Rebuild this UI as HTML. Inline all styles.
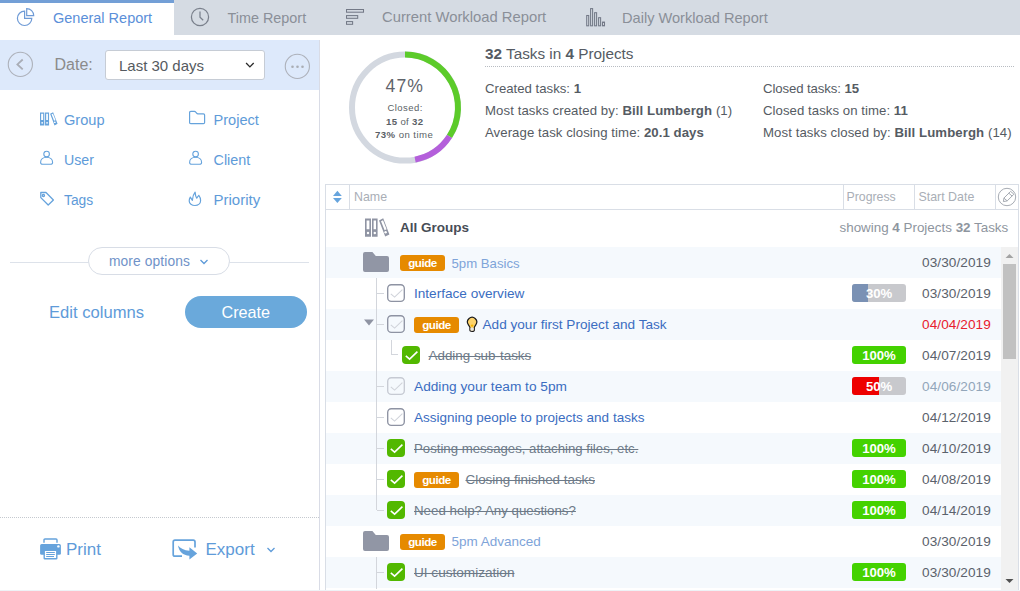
<!DOCTYPE html><html><head><meta charset="utf-8"><style>
html,body{margin:0;padding:0;width:1020px;height:591px;overflow:hidden;background:#fff;font-family:"Liberation Sans",sans-serif}
.t{position:absolute;white-space:nowrap}
b{font-weight:700}
</style></head><body>
<div style="position:absolute;left:0;top:0;width:1020px;height:35px;background:#d5dbe3"></div>
<div style="position:absolute;left:0;top:0;width:174px;height:35px;background:#fff"></div>
<div style="position:absolute;left:0;top:0;width:174px;height:3px;background:#739fd6"></div>
<svg style="position:absolute;left:16px;top:7px" width="20" height="20" viewBox="0 0 20 20" fill="none" stroke="#6f9bd6" stroke-width="1.2">
<path d="M8.6 4.1 A7.2 7.2 0 1 0 15.8 11.3 L8.6 11.3 Z"/><path d="M10.7 1.6 A7 7 0 0 1 17.7 8.6 L10.7 8.6 Z"/></svg>
<svg style="position:absolute;left:190px;top:7px" width="20" height="20" viewBox="0 0 20 20" fill="none" stroke="#7a808c" stroke-width="1.25">
<circle cx="10" cy="10" r="8.6"/><path d="M10 4.5 V10.2 L13.2 13.2"/></svg>
<svg style="position:absolute;left:346px;top:9px" width="20" height="18" viewBox="0 0 20 18" fill="none" stroke="#737987" stroke-width="1.05">
<rect x="0.5" y="0.5" width="17" height="2.7"/><rect x="0.5" y="6.6" width="11.2" height="2.7"/><rect x="0.5" y="12.6" width="6.1" height="2.7"/></svg>
<svg style="position:absolute;left:586px;top:8px" width="20" height="19" viewBox="0 0 20 19" fill="none" stroke="#737987" stroke-width="1.05">
<rect x="0.7" y="7.5" width="2" height="10.3"/><rect x="4.6" y="0.6" width="2" height="17.2"/><rect x="8.6" y="4.7" width="2" height="13.1"/><rect x="12.6" y="9.7" width="2" height="8.1"/><rect x="16.5" y="14.1" width="2" height="3.7"/></svg>
<div style="position:absolute;left:0;top:40px;width:319px;height:50px;background:#dde9fb"></div>
<div style="position:absolute;left:319px;top:40px;width:1px;height:550px;background:#d9dce6"></div>
<svg style="position:absolute;left:7px;top:51px" width="27" height="27" viewBox="0 0 27 27" fill="none" stroke="#adb1ba" stroke-width="1.1">
<circle cx="13.35" cy="13.35" r="12.1"/><path d="M15.7 8.5 L10.4 13.4 L15.7 18.3" stroke="#a9adb6" stroke-width="1.8"/></svg>
<div style="position:absolute;left:105px;top:50px;width:158px;height:28px;background:#fff;border:1px solid #c6ccd5;border-radius:3px"></div>
<svg style="position:absolute;left:244px;top:60px" width="12" height="10" viewBox="0 0 12 10" fill="none" stroke="#2a2a2a" stroke-width="1.35">
<path d="M2.1 3.1 L5.9 6.9 L9.7 3.1"/></svg>
<svg style="position:absolute;left:284px;top:53px" width="27" height="27" viewBox="0 0 27 27" fill="none" stroke="#adb1ba" stroke-width="1.1">
<circle cx="13.35" cy="13.35" r="12.1"/><g fill="#a9adb4" stroke="none"><circle cx="8.5" cy="13.8" r="1.3"/><circle cx="13.5" cy="13.8" r="1.3"/><circle cx="18.5" cy="13.8" r="1.3"/></g></svg>
<svg style="position:absolute;left:40px;top:112px" width="18" height="14" viewBox="0 0 25 19.4"><g fill="#66a3dc">
<path fill-rule="evenodd" d="M0 0.6 H6 V18.8 H0 Z M1.6 2.4 V11.2 H4.4 V2.4 Z"/>
<path fill-rule="evenodd" d="M7 0.6 H12.6 V18.8 H7 Z M8.6 2.4 V11.2 H11 V2.4 Z"/>
<path fill-rule="evenodd" d="M14 2.4 L18.2 0.2 L24.4 16.4 L20.2 18.6 Z M16 3.2 L19.6 12.2 L21.6 11.3 L18 2.3 Z"/>
</g>
<circle cx="3" cy="15" r="1.2" fill="#fff"/><circle cx="9.8" cy="15" r="1.2" fill="#fff"/><circle cx="20.6" cy="14.2" r="1.2" fill="#fff"/></svg>
<svg style="position:absolute;left:188px;top:110px" width="18" height="15" viewBox="0 0 18 15" fill="none" stroke="#66a3dc" stroke-width="1.2">
<path d="M1.6 2.6 Q1.6 1.4 2.8 1.4 H6.4 Q7.2 1.4 7.8 2.2 L8.6 3.2 Q9.1 3.9 10 3.9 H15.4 Q16.6 3.9 16.6 5.1 V12.4 Q16.6 13.6 15.4 13.6 H2.8 Q1.6 13.6 1.6 12.4 Z"/></svg>
<svg style="position:absolute;left:39px;top:150px" width="16" height="16" viewBox="0 0 16 16" fill="none" stroke="#66a3dc" stroke-width="1.1"><circle cx="7.6" cy="4.1" r="2.8"/><path d="M1.6 12.4 C1.6 9.4 4.1 7.3 7.6 7.3 C11.1 7.3 13.6 9.4 13.6 12.4 C13.6 13.8 12.6 14.3 11.4 14.3 H3.8 C2.6 14.3 1.6 13.8 1.6 12.4 Z"/></svg>
<svg style="position:absolute;left:188px;top:150px" width="16" height="16" viewBox="0 0 16 16" fill="none" stroke="#66a3dc" stroke-width="1.1"><circle cx="7.6" cy="4.1" r="2.8"/><path d="M1.6 12.4 C1.6 9.4 4.1 7.3 7.6 7.3 C11.1 7.3 13.6 9.4 13.6 12.4 C13.6 13.8 12.6 14.3 11.4 14.3 H3.8 C2.6 14.3 1.6 13.8 1.6 12.4 Z"/></svg>
<svg style="position:absolute;left:38px;top:190px" width="18" height="17" viewBox="0 0 18 17" fill="none" stroke="#66a3dc" stroke-width="1.3" stroke-linejoin="round">
<path d="M2.8 2.5 H8 L15.4 10 L10.2 15 L2.8 7.6 Z"/><circle cx="5.4" cy="5.4" r="1.1"/></svg>
<svg style="position:absolute;left:188px;top:190px" width="14" height="17" viewBox="0 0 14 17" fill="none" stroke="#66a3dc" stroke-width="1.2" stroke-linejoin="round">
<path d="M2.3 7.1 L4.4 10.3 C4.6 6.5 5.5 4 7.1 2.1 C7.3 4.5 7.6 6.8 8.7 8.2 C9.4 7.2 10 6.2 10.8 5.3 C12 6.8 12.6 8.5 12.6 10.5 C12.6 13.5 10.2 15.5 7 15.5 C3.8 15.5 1.2 13.5 1.2 11 C1.2 9.5 1.6 8.2 2.3 7.1 Z"/></svg>
<div style="position:absolute;left:10px;top:262px;width:299px;height:1px;background:#dde2ea"></div>
<div style="position:absolute;left:88px;top:247px;width:140px;height:26px;background:#fff;border:1px solid #d8dde6;border-radius:14px"></div>
<svg style="position:absolute;left:199px;top:258px" width="10" height="8" viewBox="0 0 10 8" fill="none" stroke="#5d9ad8" stroke-width="1.3"><path d="M1.5 2 L5 5.5 L8.5 2"/></svg>
<div style="position:absolute;left:185px;top:296px;width:122px;height:32px;background:#6aa9db;border-radius:16px"></div>
<div style="position:absolute;left:0;top:517px;width:319px;height:0;border-top:1px dotted #c5c9cf"></div>
<svg style="position:absolute;left:38px;top:537px" width="24" height="24" viewBox="0 0 24 24">
<path d="M6 5.8 V3 Q6 2 7 2 H18 Q19 2 19 3 V5.8" fill="none" stroke="#66a3dc" stroke-width="1.4"/>
<rect x="2.1" y="7" width="20.8" height="10.7" rx="1.5" fill="#66a3dc"/>
<rect x="6.2" y="13.4" width="12.6" height="8.4" rx="0.6" fill="#fff" stroke="#66a3dc" stroke-width="1.4"/>
<path d="M8.2 15.5 H16.8 M8.2 17.5 H16.8 M8.2 19.5 H16" stroke="#66a3dc" stroke-width="1"/><circle cx="20.4" cy="9.4" r="1.2" fill="#fff"/></svg>
<svg style="position:absolute;left:172px;top:539px" width="27" height="22" viewBox="0 0 27 22" fill="none">
<path d="M10 17.2 H3 Q1.2 17.2 1.2 15.4 V3 Q1.2 1.2 3 1.2 H21.2 Q23 1.2 23 3 V8.5" stroke="#66a3dc" stroke-width="1.7"/>
<path d="M6 6.6 C8.5 9.5 12 11.5 17.4 11.8 V8.3 L25.2 14.5 L17.4 20.4 V16.8 C11 16.5 6.8 12.5 6 6.6 Z" fill="#66a3dc"/></svg>
<svg style="position:absolute;left:266px;top:546px" width="10" height="8" viewBox="0 0 10 8" fill="none" stroke="#5e9bd9" stroke-width="1.3"><path d="M1.5 2 L5 5.5 L8.5 2"/></svg>
<svg style="position:absolute;left:0;top:0" width="1020" height="200"><circle cx="405" cy="107.6" r="53" stroke="#d3d8e0" stroke-width="6" fill="none"/><path d="M405.00 54.60 A53 53 0 0 1 449.45 136.47" stroke="#5ccb2a" stroke-width="6" fill="none"/><path d="M449.45 136.47 A53 53 0 0 1 415.11 159.63" stroke="#b45fdb" stroke-width="6" fill="none"/></svg>
<div style="position:absolute;left:485px;top:66px;width:529px;height:0;border-top:1px dotted #b8bcc2"></div>
<div style="position:absolute;left:325px;top:184px;width:694px;height:406px;border-left:1px solid #d9dee6;border-top:1px solid #d9dee6;border-right:1px solid #d9dee6;box-sizing:border-box"></div>
<div style="position:absolute;left:325px;top:209px;width:694px;height:1px;background:#d9dee6"></div>
<div style="position:absolute;left:349px;top:185px;width:1px;height:24px;background:#d9dee6"></div>
<div style="position:absolute;left:843px;top:185px;width:1px;height:24px;background:#d9dee6"></div>
<div style="position:absolute;left:914px;top:185px;width:1px;height:24px;background:#d9dee6"></div>
<div style="position:absolute;left:995px;top:185px;width:1px;height:24px;background:#d9dee6"></div>
<svg style="position:absolute;left:332px;top:190px" width="11" height="14" viewBox="0 0 11 14" fill="#66a4dd">
<path d="M1 6 L5.4 0.8 L9.8 6 Z"/><path d="M1 8 L5.4 13 L9.8 8 Z"/></svg>
<svg style="position:absolute;left:997px;top:187px" width="20" height="20" viewBox="0 0 20 20" fill="none" stroke="#a6abb3" stroke-width="1">
<circle cx="10" cy="10" r="8.7"/><path d="M13.6 4.4 L16.9 7.2 L10.2 13.9 L6.4 14.6 L6.9 11.1 Z M11.8 6.2 L15.1 9.0 M6.9 11.1 L10.2 13.9"/></svg>
<svg style="position:absolute;left:365px;top:218px" width="25" height="20" viewBox="0 0 25 20">
<g fill="#8f94a3">
<path fill-rule="evenodd" d="M0 0.6 H6 V18.8 H0 Z M1.6 2.4 V11.2 H4.4 V2.4 Z"/>
<path fill-rule="evenodd" d="M7 0.6 H12.6 V18.8 H7 Z M8.6 2.4 V11.2 H11 V2.4 Z"/>
<path fill-rule="evenodd" d="M14 2.4 L18.2 0.2 L24.4 16.4 L20.2 18.6 Z M16 3.2 L19.6 12.2 L21.6 11.3 L18 2.3 Z"/>
</g>
<circle cx="3" cy="15" r="1.2" fill="#fff"/><circle cx="9.8" cy="15" r="1.2" fill="#fff"/><circle cx="20.6" cy="14.2" r="1.2" fill="#fff"/></svg>
<div style="position:absolute;left:326px;top:247px;width:675px;height:31px;background:#f5f9fd"></div>
<div style="position:absolute;left:326px;top:278px;width:675px;height:31px;background:#ffffff"></div>
<div style="position:absolute;left:326px;top:309px;width:675px;height:31px;background:#f5f9fd"></div>
<div style="position:absolute;left:326px;top:340px;width:675px;height:31px;background:#ffffff"></div>
<div style="position:absolute;left:326px;top:371px;width:675px;height:31px;background:#f5f9fd"></div>
<div style="position:absolute;left:326px;top:402px;width:675px;height:31px;background:#ffffff"></div>
<div style="position:absolute;left:326px;top:433px;width:675px;height:31px;background:#f5f9fd"></div>
<div style="position:absolute;left:326px;top:464px;width:675px;height:31px;background:#ffffff"></div>
<div style="position:absolute;left:326px;top:495px;width:675px;height:31px;background:#f5f9fd"></div>
<div style="position:absolute;left:326px;top:526px;width:675px;height:31px;background:#ffffff"></div>
<div style="position:absolute;left:326px;top:557px;width:675px;height:31px;background:#f5f9fd"></div>
<svg style="position:absolute;left:363px;top:252px" width="26" height="20" viewBox="0 0 26 20"><path d="M0 2 Q0 0 2 0 H9.4 L12.8 4 H24 Q26 4 26 6 V18 Q26 20 24 20 H2 Q0 20 0 18 Z" fill="#9196a5"/></svg>
<div style="position:absolute;left:400px;top:255px;width:45px;height:16px;background:#e68a00;border-radius:3px"></div>
<div style="position:absolute;left:376px;top:278px;width:1px;height:232px;background:#d3d6dc"></div>
<div style="position:absolute;left:377px;top:293px;width:7px;height:1px;background:#d3d6dc"></div>
<div style="position:absolute;left:377px;top:324px;width:7px;height:1px;background:#d3d6dc"></div>
<div style="position:absolute;left:377px;top:386px;width:7px;height:1px;background:#d3d6dc"></div>
<div style="position:absolute;left:377px;top:417px;width:7px;height:1px;background:#d3d6dc"></div>
<div style="position:absolute;left:377px;top:448px;width:7px;height:1px;background:#d3d6dc"></div>
<div style="position:absolute;left:377px;top:479px;width:7px;height:1px;background:#d3d6dc"></div>
<div style="position:absolute;left:377px;top:510px;width:7px;height:1px;background:#d3d6dc"></div>
<svg style="position:absolute;left:387px;top:284px" width="18" height="18" viewBox="0 0 18 18"><rect x="0.7" y="0.7" width="16.6" height="16.6" rx="3.6" fill="none" stroke="#8e93a3" stroke-width="1.35"/><path d="M3.8 9.9 L7.6 13.1 L15.4 5.6" stroke="#d0d3da" stroke-width="1.1" fill="none"/></svg>
<div style="position:absolute;left:852px;top:284px;width:54px;height:18px;background:#c8c9cd;border-radius:3px;overflow:hidden"><div style="width:16px;height:18px;background:#7a91b4"></div></div>
<svg style="position:absolute;left:364px;top:319px" width="11" height="7" viewBox="0 0 11 7"><path d="M0 0.5 H10 L5 6.5 Z" fill="#8f94a3"/></svg>
<svg style="position:absolute;left:387px;top:315px" width="18" height="18" viewBox="0 0 18 18"><rect x="0.7" y="0.7" width="16.6" height="16.6" rx="3.6" fill="none" stroke="#8e93a3" stroke-width="1.35"/><path d="M3.8 9.9 L7.6 13.1 L15.4 5.6" stroke="#d0d3da" stroke-width="1.1" fill="none"/></svg>
<div style="position:absolute;left:414px;top:317px;width:45px;height:16px;background:#e68a00;border-radius:3px"></div>
<svg style="position:absolute;left:466px;top:316px" width="12" height="17" viewBox="0 0 12 17"><path d="M2.3 8.6 A4.6 4.6 0 1 1 9.9 8.6 L8.3 11.2 V14 Q8.3 15.4 6.1 15.4 Q3.9 15.4 3.9 14 V11.2 Z" fill="#fdd36b" stroke="#1a1a1a" stroke-width="1.2" stroke-linejoin="round"/><path d="M4.5 11.8 H7.7 V13.9 Q7.7 14.8 6.1 14.8 Q4.5 14.8 4.5 13.9 Z" fill="#e6e6e6"/><circle cx="6.1" cy="9.6" r="1.2" fill="#f5b400"/></svg>
<div style="position:absolute;left:391px;top:340px;width:1px;height:15px;background:#d3d6dc"></div>
<div style="position:absolute;left:392px;top:354px;width:6px;height:1px;background:#d3d6dc"></div>
<svg style="position:absolute;left:402px;top:346px" width="18" height="18" viewBox="0 0 18 18"><rect x="0" y="0" width="18" height="18" rx="4" fill="#52b800"/><path d="M3.8 9.9 L7.6 13.1 L15.4 5.7" stroke="#fff" stroke-width="1.6" fill="none"/></svg>
<div style="position:absolute;left:852px;top:346px;width:54px;height:18px;background:#c8c9cd;border-radius:3px;overflow:hidden"><div style="width:54px;height:18px;background:#44d200"></div></div>
<svg style="position:absolute;left:387px;top:377px" width="18" height="18" viewBox="0 0 18 18"><rect x="0.7" y="0.7" width="16.6" height="16.6" rx="3.6" fill="none" stroke="#c6cad3" stroke-width="1.35"/><path d="M3.8 9.9 L7.6 13.1 L15.4 5.6" stroke="#d0d3da" stroke-width="1.1" fill="none"/></svg>
<div style="position:absolute;left:852px;top:377px;width:54px;height:18px;background:#c8c9cd;border-radius:3px;overflow:hidden"><div style="width:27px;height:18px;background:#ee0000"></div></div>
<svg style="position:absolute;left:387px;top:408px" width="18" height="18" viewBox="0 0 18 18"><rect x="0.7" y="0.7" width="16.6" height="16.6" rx="3.6" fill="none" stroke="#8e93a3" stroke-width="1.35"/><path d="M3.8 9.9 L7.6 13.1 L15.4 5.6" stroke="#d0d3da" stroke-width="1.1" fill="none"/></svg>
<svg style="position:absolute;left:387px;top:439px" width="18" height="18" viewBox="0 0 18 18"><rect x="0" y="0" width="18" height="18" rx="4" fill="#52b800"/><path d="M3.8 9.9 L7.6 13.1 L15.4 5.7" stroke="#fff" stroke-width="1.6" fill="none"/></svg>
<div style="position:absolute;left:852px;top:439px;width:54px;height:18px;background:#c8c9cd;border-radius:3px;overflow:hidden"><div style="width:54px;height:18px;background:#44d200"></div></div>
<svg style="position:absolute;left:387px;top:470px" width="18" height="18" viewBox="0 0 18 18"><rect x="0" y="0" width="18" height="18" rx="4" fill="#52b800"/><path d="M3.8 9.9 L7.6 13.1 L15.4 5.7" stroke="#fff" stroke-width="1.6" fill="none"/></svg>
<div style="position:absolute;left:414px;top:472px;width:45px;height:16px;background:#e68a00;border-radius:3px"></div>
<div style="position:absolute;left:852px;top:470px;width:54px;height:18px;background:#c8c9cd;border-radius:3px;overflow:hidden"><div style="width:54px;height:18px;background:#44d200"></div></div>
<svg style="position:absolute;left:387px;top:501px" width="18" height="18" viewBox="0 0 18 18"><rect x="0" y="0" width="18" height="18" rx="4" fill="#52b800"/><path d="M3.8 9.9 L7.6 13.1 L15.4 5.7" stroke="#fff" stroke-width="1.6" fill="none"/></svg>
<div style="position:absolute;left:852px;top:501px;width:54px;height:18px;background:#c8c9cd;border-radius:3px;overflow:hidden"><div style="width:54px;height:18px;background:#44d200"></div></div>
<svg style="position:absolute;left:363px;top:531px" width="26" height="20" viewBox="0 0 26 20"><path d="M0 2 Q0 0 2 0 H9.4 L12.8 4 H24 Q26 4 26 6 V18 Q26 20 24 20 H2 Q0 20 0 18 Z" fill="#9196a5"/></svg>
<div style="position:absolute;left:400px;top:534px;width:45px;height:16px;background:#e68a00;border-radius:3px"></div>
<div style="position:absolute;left:376px;top:557px;width:1px;height:32px;background:#d3d6dc"></div>
<div style="position:absolute;left:377px;top:572px;width:7px;height:1px;background:#d3d6dc"></div>
<svg style="position:absolute;left:387px;top:563px" width="18" height="18" viewBox="0 0 18 18"><rect x="0" y="0" width="18" height="18" rx="4" fill="#52b800"/><path d="M3.8 9.9 L7.6 13.1 L15.4 5.7" stroke="#fff" stroke-width="1.6" fill="none"/></svg>
<div style="position:absolute;left:852px;top:563px;width:54px;height:18px;background:#c8c9cd;border-radius:3px;overflow:hidden"><div style="width:54px;height:18px;background:#44d200"></div></div>
<div style="position:absolute;left:1001px;top:247px;width:17px;height:343px;background:#f1f1f1"></div>
<div style="position:absolute;left:1003px;top:264px;width:13px;height:95px;background:#c1c1c1"></div>
<svg style="position:absolute;left:1005px;top:253px" width="9" height="6" viewBox="0 0 9 6"><path d="M0.5 5 L4.5 1 L8.5 5 Z" fill="#a3a3a3"/></svg>
<svg style="position:absolute;left:1005px;top:578px" width="9" height="6" viewBox="0 0 9 6"><path d="M0.5 1 L4.5 5 L8.5 1 Z" fill="#505050"/></svg>
<div style="position:absolute;left:0;top:590px;width:1020px;height:1px;background:#eef2f6"></div>
<div class="t" style="left:53px;top:10.73px;font-size:14.5px;line-height:14.5px;color:#5b8fd9;font-weight:400;letter-spacing:0px;">General Report</div>
<div class="t" style="left:227.5px;top:10.81px;font-size:14.4px;line-height:14.4px;color:#8a8f98;font-weight:400;letter-spacing:0px;">Time Report</div>
<div class="t" style="left:382px;top:10.47px;font-size:14.8px;line-height:14.8px;color:#8a8f98;font-weight:400;letter-spacing:0px;">Current Workload Report</div>
<div class="t" style="left:622px;top:10.64px;font-size:14.6px;line-height:14.6px;color:#8a8f98;font-weight:400;letter-spacing:0px;">Daily Workload Report</div>
<div class="t" style="left:54.5px;top:57.16px;font-size:16px;line-height:16px;color:#8b8b8b;font-weight:400;letter-spacing:0px;">Date:</div>
<div class="t" style="left:119px;top:58.00px;font-size:15px;line-height:15px;color:#555a60;font-weight:400;letter-spacing:0px;">Last 30 days</div>
<div class="t" style="left:64px;top:112.84px;font-size:14.6px;line-height:14.6px;color:#5e9bd9;font-weight:400;letter-spacing:0px;">Group</div>
<div class="t" style="left:213.5px;top:112.84px;font-size:14.6px;line-height:14.6px;color:#5e9bd9;font-weight:400;letter-spacing:0px;">Project</div>
<div class="t" style="left:64px;top:153.48px;font-size:14.2px;line-height:14.2px;color:#5e9bd9;font-weight:400;letter-spacing:0px;">User</div>
<div class="t" style="left:213.5px;top:153.31px;font-size:14.4px;line-height:14.4px;color:#5e9bd9;font-weight:400;letter-spacing:0px;">Client</div>
<div class="t" style="left:64px;top:193.72px;font-size:13.8px;line-height:13.8px;color:#5e9bd9;font-weight:400;letter-spacing:0px;">Tags</div>
<div class="t" style="left:213.5px;top:191.80px;font-size:15px;line-height:15px;color:#5e9bd9;font-weight:400;letter-spacing:0px;">Priority</div>
<div class="t" style="left:109px;top:254.52px;font-size:13.8px;line-height:13.8px;color:#7092c8;font-weight:400;letter-spacing:0.1px;">more options</div>
<div class="t" style="left:49px;top:304.75px;font-size:16.6px;line-height:16.6px;color:#5e9bd9;font-weight:400;letter-spacing:0px;">Edit columns</div>
<div class="t" style="left:221.5px;top:304.39px;font-size:16.2px;line-height:16.2px;color:#fff;font-weight:400;letter-spacing:0px;">Create</div>
<div class="t" style="left:66px;top:541.31px;font-size:17px;line-height:17px;color:#5e9bd9;font-weight:400;letter-spacing:0px;">Print</div>
<div class="t" style="left:205.5px;top:541.31px;font-size:17px;line-height:17px;color:#5e9bd9;font-weight:400;letter-spacing:0px;">Export</div>
<div class="t" style="left:385.5px;top:78.10px;font-size:17.6px;line-height:17.6px;color:#5f646b;font-weight:400;letter-spacing:1.1px;">47%</div>
<div class="t" style="left:387.5px;top:103.06px;font-size:9.5px;line-height:9.5px;color:#5a5f66;font-weight:400;letter-spacing:0.45px;">Closed:</div>
<div class="t" style="left:386px;top:116.97px;font-size:9.6px;line-height:9.6px;color:#5a5f66;font-weight:400;letter-spacing:0.35px;"><b>15</b> of <b>32</b></div>
<div class="t" style="left:375px;top:129.57px;font-size:9.6px;line-height:9.6px;color:#5a5f66;font-weight:400;letter-spacing:0.45px;"><b>73%</b> on time</div>
<div class="t" style="left:485px;top:46.05px;font-size:15.3px;line-height:15.3px;color:#555b63;font-weight:400;letter-spacing:0px;"><b>32</b> Tasks in <b>4</b> Projects</div>
<div class="t" style="left:485px;top:81.83px;font-size:13.2px;line-height:13.2px;color:#555b63;font-weight:400;letter-spacing:0px;">Created tasks: <b>1</b></div>
<div class="t" style="left:485px;top:104.23px;font-size:13.2px;line-height:13.2px;color:#555b63;font-weight:400;letter-spacing:0.08px;">Most tasks created by: <b>Bill Lumbergh</b> (1)</div>
<div class="t" style="left:485px;top:126.23px;font-size:13.2px;line-height:13.2px;color:#555b63;font-weight:400;letter-spacing:0.06px;">Average task closing time: <b>20.1 days</b></div>
<div class="t" style="left:763px;top:81.83px;font-size:13.2px;line-height:13.2px;color:#555b63;font-weight:400;letter-spacing:-0.1px;">Closed tasks: <b>15</b></div>
<div class="t" style="left:763px;top:104.23px;font-size:13.2px;line-height:13.2px;color:#555b63;font-weight:400;letter-spacing:0.05px;">Closed tasks on time: <b>11</b></div>
<div class="t" style="left:763px;top:126.23px;font-size:13.2px;line-height:13.2px;color:#555b63;font-weight:400;letter-spacing:0.08px;">Most tasks closed by: <b>Bill Lumbergh</b> (14)</div>
<div class="t" style="left:354px;top:190.70px;font-size:12.4px;line-height:12.4px;color:#a9aeb6;font-weight:400;letter-spacing:0px;">Name</div>
<div class="t" style="left:846.5px;top:190.79px;font-size:12.3px;line-height:12.3px;color:#a9aeb6;font-weight:400;letter-spacing:0px;">Progress</div>
<div class="t" style="left:918.5px;top:190.70px;font-size:12.4px;line-height:12.4px;color:#a9aeb6;font-weight:400;letter-spacing:0px;">Start Date</div>
<div class="t" style="left:400px;top:221.47px;font-size:13.5px;line-height:13.5px;color:#474d56;font-weight:700;letter-spacing:0px;">All Groups</div>
<div class="t" style="left:839.5px;top:220.66px;font-size:13.4px;line-height:13.4px;color:#8e959e;font-weight:400;letter-spacing:0px;">showing <b>4</b> Projects <b>32</b> Tasks</div>
<div class="t" style="left:400px;top:257.38px;font-size:11.6px;line-height:11.6px;color:#fff;font-weight:700;letter-spacing:-0.45px;width:45px;text-align:center">guide</div>
<div class="t" style="left:451.5px;top:256.83px;font-size:13.2px;line-height:13.2px;color:#7ea4d9;font-weight:400;letter-spacing:0px;">5pm Basics</div>
<div class="t" style="left:922px;top:256.29px;font-size:13.6px;line-height:13.6px;color:#5b626c;font-weight:400;letter-spacing:0.08px;">03/30/2019</div>
<div class="t" style="left:414px;top:287.09px;font-size:13.6px;line-height:13.6px;color:#3b6dc1;font-weight:400;letter-spacing:0px;">Interface overview</div>
<div class="t" style="left:852px;top:287.13px;font-size:13.2px;line-height:13.2px;color:#fff;font-weight:700;letter-spacing:-0.1px;width:54px;text-align:center">30%</div>
<div class="t" style="left:922px;top:286.69px;font-size:13.6px;line-height:13.6px;color:#5b626c;font-weight:400;letter-spacing:0.08px;">03/30/2019</div>
<div class="t" style="left:414px;top:319.38px;font-size:11.6px;line-height:11.6px;color:#fff;font-weight:700;letter-spacing:-0.45px;width:45px;text-align:center">guide</div>
<div class="t" style="left:482.5px;top:318.09px;font-size:13.6px;line-height:13.6px;color:#3b6dc1;font-weight:400;letter-spacing:0px;">Add your first Project and Task</div>
<div class="t" style="left:922px;top:317.69px;font-size:13.6px;line-height:13.6px;color:#e8202e;font-weight:400;letter-spacing:0.08px;">04/04/2019</div>
<div class="t" style="left:428.5px;top:349.26px;font-size:13.4px;line-height:13.4px;color:#6d7a88;font-weight:400;letter-spacing:0px;text-decoration:line-through;text-decoration-thickness:1px">Adding sub-tasks</div>
<div class="t" style="left:852px;top:349.13px;font-size:13.2px;line-height:13.2px;color:#fff;font-weight:700;letter-spacing:-0.1px;width:54px;text-align:center">100%</div>
<div class="t" style="left:922px;top:348.69px;font-size:13.6px;line-height:13.6px;color:#5b626c;font-weight:400;letter-spacing:0.08px;">04/07/2019</div>
<div class="t" style="left:414px;top:380.00px;font-size:13.7px;line-height:13.7px;color:#3b6dc1;font-weight:400;letter-spacing:0px;">Adding your team to 5pm</div>
<div class="t" style="left:852px;top:380.13px;font-size:13.2px;line-height:13.2px;color:#fff;font-weight:700;letter-spacing:-0.1px;width:54px;text-align:center">50%</div>
<div class="t" style="left:922px;top:379.69px;font-size:13.6px;line-height:13.6px;color:#92a6ba;font-weight:400;letter-spacing:0.08px;">04/06/2019</div>
<div class="t" style="left:414px;top:411.17px;font-size:13.5px;line-height:13.5px;color:#3b6dc1;font-weight:400;letter-spacing:0px;">Assigning people to projects and tasks</div>
<div class="t" style="left:922px;top:410.69px;font-size:13.6px;line-height:13.6px;color:#5b626c;font-weight:400;letter-spacing:0.08px;">04/12/2019</div>
<div class="t" style="left:414px;top:442.43px;font-size:13.2px;line-height:13.2px;color:#6d7a88;font-weight:400;letter-spacing:0px;text-decoration:line-through;text-decoration-thickness:1px">Posting messages, attaching files, etc.</div>
<div class="t" style="left:852px;top:442.13px;font-size:13.2px;line-height:13.2px;color:#fff;font-weight:700;letter-spacing:-0.1px;width:54px;text-align:center">100%</div>
<div class="t" style="left:922px;top:441.69px;font-size:13.6px;line-height:13.6px;color:#5b626c;font-weight:400;letter-spacing:0.08px;">04/10/2019</div>
<div class="t" style="left:414px;top:474.38px;font-size:11.6px;line-height:11.6px;color:#fff;font-weight:700;letter-spacing:-0.45px;width:45px;text-align:center">guide</div>
<div class="t" style="left:465.5px;top:473.26px;font-size:13.4px;line-height:13.4px;color:#6d7a88;font-weight:400;letter-spacing:0px;text-decoration:line-through;text-decoration-thickness:1px">Closing finished tasks</div>
<div class="t" style="left:852px;top:473.13px;font-size:13.2px;line-height:13.2px;color:#fff;font-weight:700;letter-spacing:-0.1px;width:54px;text-align:center">100%</div>
<div class="t" style="left:922px;top:472.69px;font-size:13.6px;line-height:13.6px;color:#5b626c;font-weight:400;letter-spacing:0.08px;">04/08/2019</div>
<div class="t" style="left:414px;top:504.34px;font-size:13.3px;line-height:13.3px;color:#6d7a88;font-weight:400;letter-spacing:0px;text-decoration:line-through;text-decoration-thickness:1px">Need help? Any questions?</div>
<div class="t" style="left:852px;top:504.13px;font-size:13.2px;line-height:13.2px;color:#fff;font-weight:700;letter-spacing:-0.1px;width:54px;text-align:center">100%</div>
<div class="t" style="left:922px;top:503.69px;font-size:13.6px;line-height:13.6px;color:#5b626c;font-weight:400;letter-spacing:0.08px;">04/14/2019</div>
<div class="t" style="left:400px;top:536.38px;font-size:11.6px;line-height:11.6px;color:#fff;font-weight:700;letter-spacing:-0.45px;width:45px;text-align:center">guide</div>
<div class="t" style="left:451.5px;top:535.37px;font-size:13.5px;line-height:13.5px;color:#7ea4d9;font-weight:400;letter-spacing:0px;">5pm Advanced</div>
<div class="t" style="left:922px;top:535.29px;font-size:13.6px;line-height:13.6px;color:#5b626c;font-weight:400;letter-spacing:0.08px;">03/30/2019</div>
<div class="t" style="left:414px;top:565.89px;font-size:13.6px;line-height:13.6px;color:#6d7a88;font-weight:400;letter-spacing:0px;text-decoration:line-through;text-decoration-thickness:1px">UI customization</div>
<div class="t" style="left:852px;top:566.13px;font-size:13.2px;line-height:13.2px;color:#fff;font-weight:700;letter-spacing:-0.1px;width:54px;text-align:center">100%</div>
<div class="t" style="left:922px;top:565.69px;font-size:13.6px;line-height:13.6px;color:#5b626c;font-weight:400;letter-spacing:0.08px;">03/30/2019</div>
</body></html>
